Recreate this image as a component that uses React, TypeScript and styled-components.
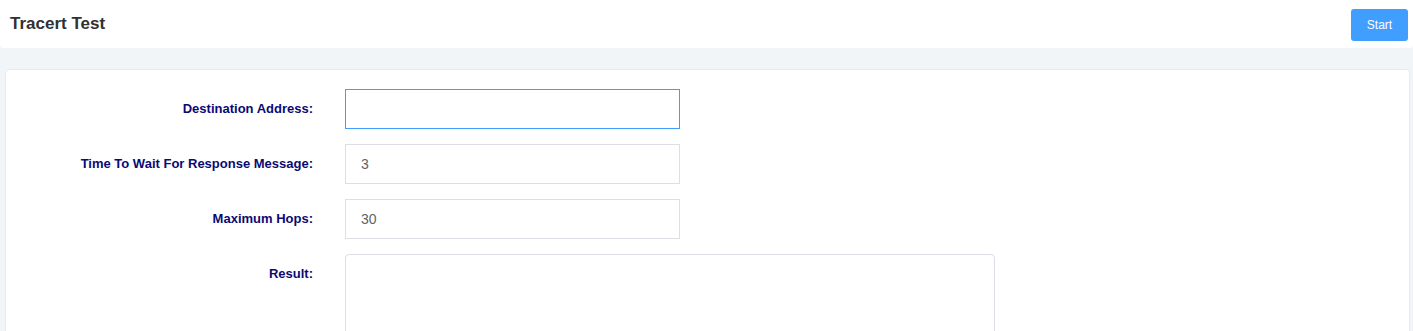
import React from "react";
import styled, { createGlobalStyle } from "styled-components";

const GlobalStyle = createGlobalStyle`
  html, body {
    margin: 0;
    padding: 0;
    background: #f2f5f8;
    font-family: "Liberation Sans", Arial, sans-serif;
    overflow: hidden;
  }
  * {
    box-sizing: border-box;
  }
`;

const Header = styled.div`
  display: flex;
  align-items: center;
  justify-content: space-between;
  height: 48px;
  padding: 0 5px 0 10px;
  background: #ffffff;
  border-radius: 0 0 4px 4px;
`;

const Title = styled.div`
  font-size: 17px;
  font-weight: bold;
  color: #303133;
  margin-top: 0;
`;

const StartButton = styled.button`
  width: 57px;
  height: 32px;
  border: none;
  border-radius: 3px;
  background: #409eff;
  color: #ffffff;
  font-family: "Liberation Sans", Arial, sans-serif;
  font-size: 12px;
  cursor: pointer;
  margin-top: 1px;
`;

const Card = styled.div`
  margin: 21px 3px 0 5px;
  padding: 19px 0 0;
  background: #ffffff;
  border: 1px solid #e6ebf2;
  border-radius: 4px;
  height: 300px;
`;

const Row = styled.div`
  display: grid;
  grid-template-columns: 339px auto;
  margin-bottom: 15px;
`;

const Label = styled.label`
  text-align: right;
  padding-right: 32px;
  line-height: 40px;
  font-size: 13px;
  font-weight: bold;
  color: #0a0a73;
`;

const Input = styled.input<{ $focused?: boolean }>`
  width: 335px;
  height: 40px;
  padding: 0 15px;
  border: 1px solid ${(p) => (p.$focused ? "#409eff" : "#dcdfe6")};
  border-radius: 0;
  outline: none;
  font-family: "Liberation Sans", Arial, sans-serif;
  font-size: 14px;
  color: #606266;
  background: #ffffff;
`;

const ResultArea = styled.textarea`
  width: 650px;
  height: 150px;
  padding: 5px 15px;
  border: 1px solid #dcdfe6;
  border-radius: 4px;
  outline: none;
  resize: none;
  font-family: "Liberation Sans", Arial, sans-serif;
  font-size: 14px;
  color: #606266;
`;

const App = () => {
  return (
    <>
      <GlobalStyle />
      <Header>
        <Title>Tracert Test</Title>
        <StartButton>Start</StartButton>
      </Header>
      <Card>
        <Row>
          <Label>Destination Address:</Label>
          <Input $focused defaultValue="" />
        </Row>
        <Row>
          <Label>Time To Wait For Response Message:</Label>
          <Input defaultValue="3" />
        </Row>
        <Row>
          <Label>Maximum Hops:</Label>
          <Input defaultValue="30" />
        </Row>
        <Row>
          <Label>Result:</Label>
          <ResultArea />
        </Row>
      </Card>
    </>
  );
};

export default App;
